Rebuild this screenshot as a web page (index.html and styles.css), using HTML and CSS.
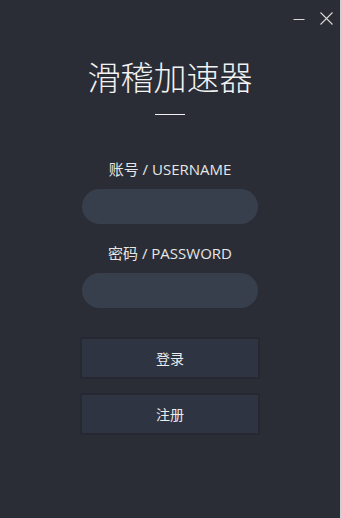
FILE: index.html
```html
<!DOCTYPE html>
<html>
<head>
<meta charset="utf-8">
<link rel="stylesheet" href="styles.css">
</head>
<body>
<div class="window">
  <div class="titlebar">
    <span class="ctrl min"><svg width="12" height="12" viewBox="0 0 12 12"><path d="M0.5 6.5H11.5" stroke="#d8d8d8" stroke-width="1"/></svg></span>
    <span class="ctrl close"><svg width="13" height="13" viewBox="0 0 13 13"><path d="M0.5 0.5L12.5 12.5M12.5 0.5L0.5 12.5" stroke="#d8d8d8" stroke-width="1.1"/></svg></span>
  </div>
  <div class="content">
    <h1 class="title">滑稽加速器</h1>
    <div class="rule"></div>
    <label class="label">账号 / USERNAME</label>
    <div class="input"></div>
    <label class="label">密码 / PASSWORD</label>
    <div class="input"></div>
    <div class="btn first">登录</div>
    <div class="btn">注册</div>
  </div>
</div>
</body>
</html>
```
FILE: styles.css
```css
html, body {
  margin: 0;
  padding: 0;
  background: #2a2d36;
}
body {
  width: 342px;
  height: 518px;
  overflow: hidden;
  font-family: "Open Sans", "Noto Sans CJK SC", sans-serif;
}
.window {
  width: 340px;
  height: 518px;
  background: #2a2d36;
  border-right: 2px solid #cfd0d2;
  position: relative;
}
.titlebar {
  height: 28px;
  display: flex;
  justify-content: flex-end;
  align-items: flex-start;
  padding-right: 7px;
  gap: 15px;
}
.ctrl { display: block; }
.min { margin-top: 8px; }
.close { margin-top: 8px; }
.content {
  display: flex;
  flex-direction: column;
  align-items: center;
}
.title {
  margin: 26px 0 0 0;
  font-family: "Noto Sans CJK SC", sans-serif;
  font-weight: 300;
  font-size: 33px;
  line-height: 44px;
  color: #f2f2f2;
}
.rule {
  width: 30px;
  height: 1px;
  background: #f0f0f0;
  margin-top: 16px;
}
.label {
  display: block;
  font-size: 15px;
  line-height: 20px;
  color: #e6e6e6;
  margin-top: 44px;
}
.input + .label { margin-top: 19px; }
.input {
  width: 176px;
  height: 35px;
  border-radius: 18px;
  background: #373e4c;
  margin-top: 10px;
}
.btn {
  box-sizing: border-box;
  width: 180px;
  height: 42px;
  background: #2f3442;
  border: 2px solid #262932;
  color: #ececec;
  font-size: 14px;
  display: flex;
  align-items: center;
  justify-content: center;
  margin-top: 14px;
}
.btn.first { margin-top: 29px; }
```
